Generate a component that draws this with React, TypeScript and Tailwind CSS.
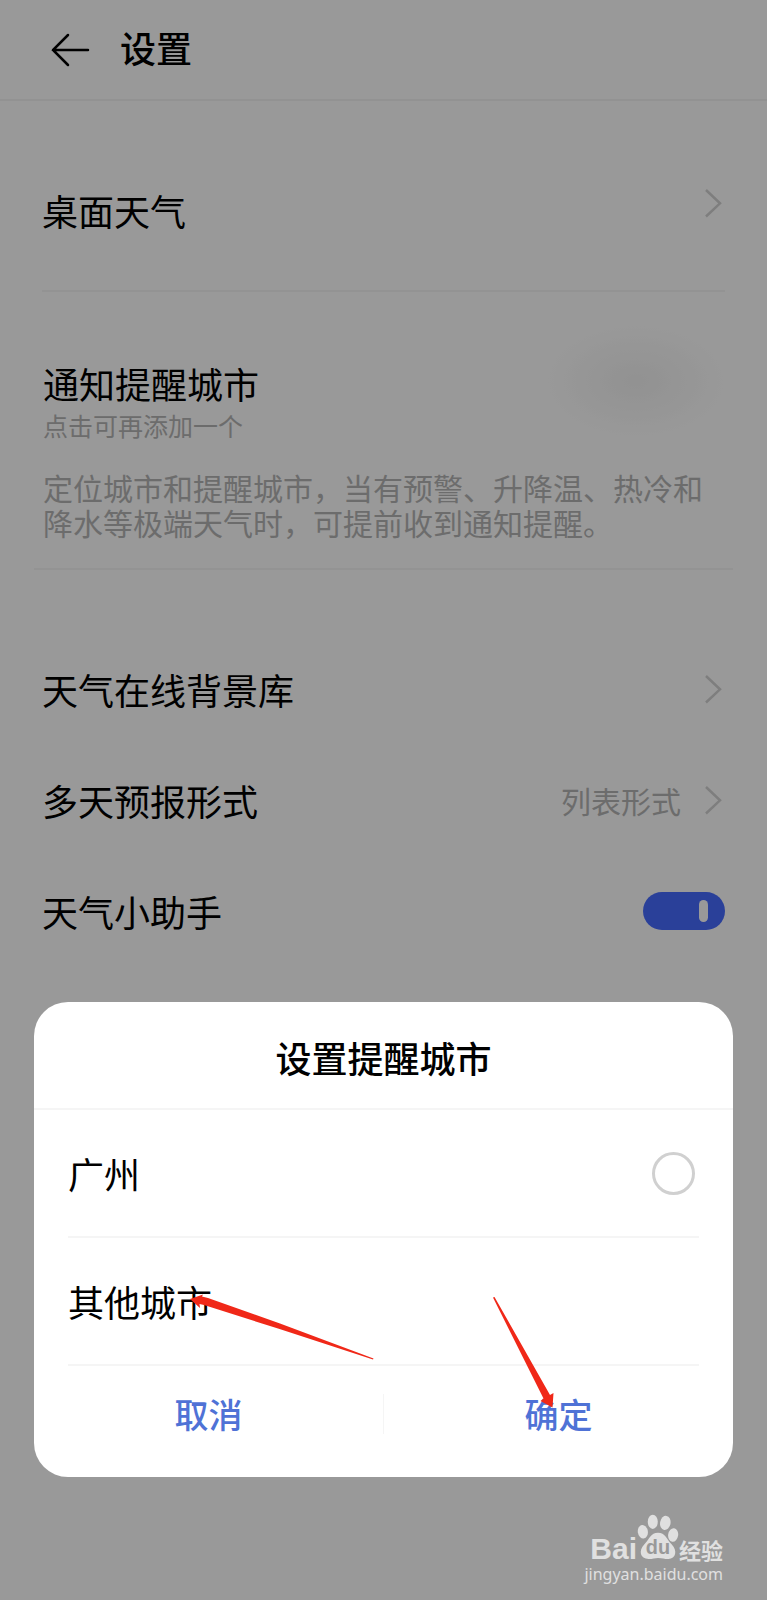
import React, { useState } from 'react';

const ChevronIcon: React.FC = () => (
  <svg width="20" height="40" viewBox="0 0 20 40" fill="none" stroke="#d2d2d2" strokeWidth="2.500" className="shrink-0" aria-hidden="true">
    <path d="M1 7L15 20.3L1 33.5" />
  </svg>
);

const BaiduWatermark: React.FC = () => (
  <div className="absolute right-11 bottom-4 text-[#e0e0e0]">
    <div className="flex items-end justify-end font-bold">
      <span className="font-['Liberation_Sans',sans-serif] text-3xl leading-[30px]">Bai</span>
      <svg width="42" height="46" viewBox="0 0 40 44" fill="currentColor" className="mb-1" aria-hidden="true">
        <ellipse cx="5.500" cy="17" rx="4.8" ry="6.500" transform="rotate(-8 5.5 17)" />
        <ellipse cx="15" cy="7.500" rx="4.8" ry="6.8" />
        <ellipse cx="27" cy="8.500" rx="5" ry="6.8" transform="rotate(10 27 8.5)" />
        <ellipse cx="34.500" cy="20" rx="4.8" ry="6.500" transform="rotate(8 34.5 20)" />
        <path d="M20 18C27 18 28 24 33 29C39 35 37 43 30 43C26 43 24 42 20 42C17 42 15 43 11 43C3 43 1 35 7 29C12 24 13 18 20 18Z" />
        <text x="20" y="38.500" textAnchor="middle" fontSize="19" fontFamily="Liberation Sans, sans-serif" fontWeight="700" fill="#999">du</text>
      </svg>
      <span className="text-[22px] leading-[30px]">经验</span>
    </div>
    <div className="font-['Noto_Sans',sans-serif] text-base leading-5">jingyan.baidu.com</div>
  </div>
);

const App: React.FC = () => {
  const [assistant, setAssistant] = useState(true);
  const [city, setCity] = useState('');

  return (
    <div className="relative min-h-screen overflow-hidden bg-white font-['Noto_Sans_CJK_SC',sans-serif] text-4xl text-black">
      {/* Header */}
      <header className="flex h-[101px] items-center gap-[30px] border-b-2 border-[#f3f3f3] pl-[50px]">
        <button type="button" aria-label="返回">
          <svg width="40" height="36" viewBox="0 0 40 36" fill="none" stroke="currentColor" strokeWidth="2.500" strokeLinecap="round" aria-hidden="true">
            <path d="M38 18H3M18 3L3 18L18 33" />
          </svg>
        </button>
        <h1 className="pb-1.5 font-medium leading-[54px]">设置</h1>
      </header>

      <main>
        {/* Desktop weather */}
        <section className="mx-[42px] border-b-2 border-[#f5f5f5] pt-[82px] pb-[53px]">
          <button type="button" className="flex w-full items-start justify-between text-left">
            <span className="leading-[54px]">桌面天气</span>
            <ChevronIcon />
          </button>
        </section>

        {/* Notification cities */}
        <section className="mx-[34px] border-b-2 border-[#f5f5f5] px-[9px] pt-[34px] pb-7">
          <div className="flex justify-between">
            <div className="pt-[30px]">
              <h2 className="leading-[54px]">通知提醒城市</h2>
              <p className="text-[25px] leading-[30px] text-[#b5b5b5]">点击可再添加一个</p>
            </div>
            <div className="h-[110px] w-[220px] bg-radial-[closest-side_at_60%_50%] from-[#f3f3f3] to-transparent" />
          </div>
          <p className="mt-[30px] text-3xl leading-[35px] text-[#b5b5b5]">
            定位城市和提醒城市，当有预警、升降温、热冷和降水等极端天气时，可提前收到通知提醒。
          </p>
        </section>

        {/* Other options */}
        <section className="px-[42px] pt-[63px]">
          <button type="button" className="flex h-[111px] w-full items-center justify-between text-left">
            <span>天气在线背景库</span>
            <ChevronIcon />
          </button>
          <button type="button" className="flex h-[111px] w-full items-center justify-between text-left">
            <span>多天预报形式</span>
            <span className="flex items-center gap-6">
              <span className="text-3xl text-[#b5b5b5]">列表形式</span>
              <ChevronIcon />
            </span>
          </button>
          <label className="flex h-[111px] items-center justify-between">
            <span>天气小助手</span>
            <input
              type="checkbox"
              role="switch"
              checked={assistant}
              onChange={(e) => setAssistant(e.target.checked)}
              className="peer sr-only"
            />
            <span className="flex h-[38px] w-[82px] items-center justify-start rounded-full bg-[#cccccc] px-[17px] peer-checked:justify-end peer-checked:bg-[#466bff]">
              <span className="h-[22px] w-[9px] rounded-full bg-white" />
            </span>
          </label>
        </section>
      </main>

      {/* City dialog */}
      <div className="absolute inset-0 flex items-end bg-black/40 px-[34px] pb-[123px]">
        <div role="dialog" aria-modal="true" aria-labelledby="city-title" className="w-full rounded-[34px] bg-white">
          <h2 id="city-title" className="border-b-2 border-[#f5f5f5] pt-7 pb-6 text-center font-medium leading-[54px]">
            设置提醒城市
          </h2>
          <div className="px-[34px]">
            <label className="flex h-32 items-center justify-between border-b-2 border-[#f5f5f5] pr-1">
              <span>广州</span>
              <input
                type="radio"
                name="city"
                value="guangzhou"
                checked={city === 'guangzhou'}
                onChange={(e) => setCity(e.target.value)}
                className="size-[43px] appearance-none rounded-full border-3 border-[#d0d0d0] checked:border-[12px] checked:border-[#4a6fd8]"
              />
            </label>
            <button type="button" className="relative flex h-32 w-full items-center border-b-2 border-[#f5f5f5] text-left">
              <span>其他城市</span>
              <svg width="184" height="67" viewBox="0 0 184 67" fill="#f02818" className="pointer-events-none absolute top-[55px] left-[122px]" aria-hidden="true">
                <path d="M0 6L13 1.500L12 3.500L18 5L90 30.500L183.500 65.500L183 66.500L88 35.500L14 12L9.500 11L10 15Z" />
              </svg>
            </button>
          </div>
          <div className="flex items-center pb-[15px] text-[34px] font-medium text-[#4f72d6]">
            <button type="button" className="h-24 flex-1">取消</button>
            <div className="h-10 w-px bg-[#f5f5f5]" />
            <button type="button" className="relative h-24 flex-1">
              确定
              <svg width="62" height="112" viewBox="0 0 62 112" fill="#f02818" className="pointer-events-none absolute right-1/2 bottom-[53px] mr-1" aria-hidden="true">
                <path d="M0 0.500L1.500 0L57 98L60.500 96L59.500 110.500L47.500 104L50.500 101.500Z" />
              </svg>
            </button>
          </div>
        </div>
      </div>

      <BaiduWatermark />
    </div>
  );
};

export default App;
